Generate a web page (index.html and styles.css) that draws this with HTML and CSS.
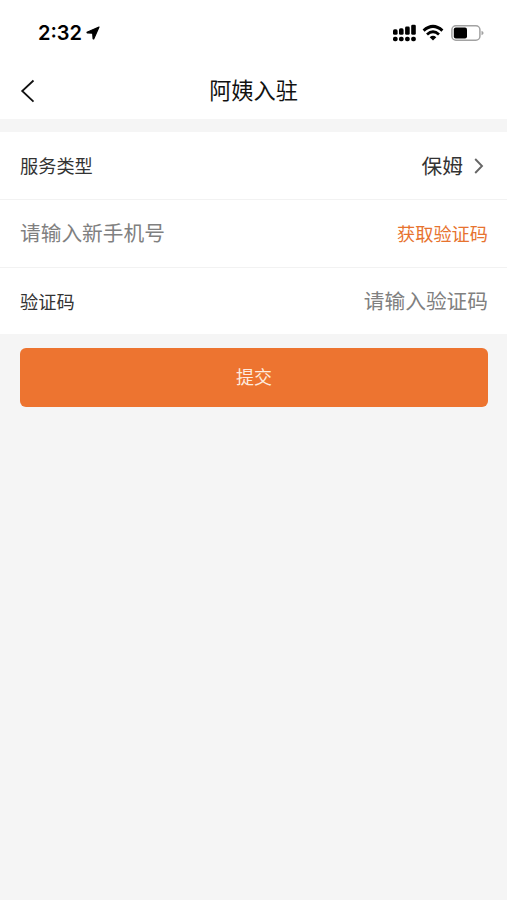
FILE: index.html
```html
<!DOCTYPE html>
<html lang="zh-CN">
<head>
  <meta charset="utf-8">
  <meta name="viewport" content="width=device-width, initial-scale=1">
  <title>阿姨入驻</title>
  <link rel="stylesheet" href="styles.css">
</head>
<body>
  <header class="header">
    <div class="status-bar">
      <div class="status-left">
        <span class="time">2:32</span>
        <svg class="location" width="14" height="14" viewBox="0 0 14 14">
          <path d="M13 1 L1 6.2 L1.2 6.8 L6.7 7.2 L7.1 12.8 L7.7 12.9 Z" stroke="#000" stroke-width="1.2" stroke-linejoin="round"/>
        </svg>
      </div>
      <div class="status-right">
        <svg width="24" height="18" viewBox="0 0 24 18">
          <rect x="0" y="5.3" width="4.6" height="5.5" rx="1.6"/>
          <rect x="6" y="4.3" width="4.6" height="6.5" rx="1.6"/>
          <rect x="12.1" y="2.5" width="4.6" height="8.3" rx="1.4"/>
          <rect x="18.2" y="0.7" width="4.6" height="10.1" rx="1.4"/>
          <rect x="0" y="12.7" width="4.6" height="4.6" rx="1.8"/>
          <rect x="6" y="12.7" width="4.6" height="4.6" rx="1.8"/>
          <rect x="12.1" y="12.7" width="4.6" height="4.6" rx="1.8"/>
          <rect x="18.2" y="12.7" width="4.6" height="4.6" rx="1.8"/>
        </svg>
        <svg class="wifi" width="22" height="18" viewBox="0 0 22 18">
          <path d="M1.6 6.6 Q11 -1.8 20.4 6.6" fill="none" stroke="#000" stroke-width="3"/>
          <path d="M5 10.5 Q11 5 17 10.5" fill="none" stroke="#000" stroke-width="2.8"/>
          <path d="M7.7 13.2 Q11 10.3 14.3 13.2 L11 16.4 Z"/>
        </svg>
        <svg class="battery" width="33" height="18" viewBox="0 0 33 18">
          <rect x="0.9" y="1.8" width="28" height="14.4" rx="4" fill="#fff" stroke="#a2a2a2" stroke-width="1.5"/>
          <rect x="2.8" y="3.6" width="13.2" height="10.8" rx="2"/>
          <path d="M30.5 6.8 Q32.6 7.6 32.6 9 Q32.6 10.4 30.5 11.2 Z" fill="#a2a2a2"/>
        </svg>
      </div>
    </div>
    <div class="nav-bar">
      <a class="back" href="#" aria-label="返回">
        <svg width="16" height="24" viewBox="0 0 16 24">
          <path d="M13.5 1.5 L2.2 12 L13.5 22.7" fill="none" stroke="#111" stroke-width="1.8"/>
        </svg>
      </a>
      <h1 class="title">阿姨入驻</h1>
    </div>
  </header>

  <form class="form">
    <div class="row">
      <span class="label">服务类型</span>
      <div class="select">
        <span class="value">保姆</span>
        <svg class="arrow" width="10" height="16" viewBox="0 0 10 16">
          <path d="M1.2 1 L8 8 L1.2 15" fill="none" stroke="#666" stroke-width="1.9"/>
        </svg>
      </div>
    </div>
    <div class="row">
      <input class="input input-phone" type="tel" placeholder="请输入新手机号">
      <button class="get-code" type="button">获取验证码</button>
    </div>
    <div class="row">
      <label class="label label-code" for="code">验证码</label>
      <input class="input input-right" id="code" type="text" placeholder="请输入验证码">
    </div>
    <div class="footer">
      <button class="submit" type="button">提交</button>
    </div>
  </form>
</body>
</html>
```

FILE: styles.css
```css
* {
  box-sizing: border-box;
}
body {
  margin: 0;
  min-height: 100vh;
  background-color: #f5f5f5;
  color: #333;
  font-family: "Noto Sans CJK SC", sans-serif;
}
.header {
  height: 119px;
  background-color: #fff;
}
.status-bar {
  display: flex;
  justify-content: space-between;
  height: 62px;
  padding: 4px 23px 0 38px;
}
.status-left,
.status-right {
  display: flex;
  align-items: center;
  height: 58px;
}
.time {
  color: #000;
  font-family: Inter, sans-serif;
  font-size: 20px;
  font-weight: 600;
}
.location {
  margin-left: 4px;
}
.wifi {
  margin: 0 7px 0 5px;
}
.nav-bar {
  display: grid;
  grid-template-columns: 60px 1fr 60px;
  align-items: center;
  height: 57px;
}
.back {
  display: flex;
  padding-left: 20px;
}
.title {
  margin: 0;
  padding-bottom: 2px;
  color: #111;
  font-size: 22.2px;
  font-weight: 400;
  line-height: 55px;
  text-align: center;
}
.form {
  margin-top: 13px;
}
.row {
  display: flex;
  align-items: center;
  justify-content: space-between;
  height: 68px;
  padding: 0 19px 0 20px;
  border-bottom: 1px solid #f2f2f2;
  background-color: #fff;
}
.row:nth-child(3) {
  height: 66px;
  border-bottom: none;
}
.label {
  padding-bottom: 2px;
  font-size: 18.2px;
}
.label-code {
  padding-bottom: 0;
}
.select {
  display: flex;
  align-items: center;
  padding-right: 4px;
  font-size: 20.7px;
}
.value {
  padding-bottom: 2px;
}
.arrow {
  margin-left: 11px;
}
.input {
  width: 240px;
  padding: 0 0 2px;
  border: none;
  outline: none;
  background: none;
  font-family: inherit;
  font-size: 20.7px;
}
.input-phone {
  padding-bottom: 4px;
}
.input::placeholder {
  color: #808080;
}
.input-right {
  text-align: right;
}
.get-code {
  padding: 0 0 2px;
  border: none;
  background: none;
  color: #e7732f;
  font-family: inherit;
  font-size: 18.2px;
}
.footer {
  padding: 14px 19px 0 20px;
}
.submit {
  width: 100%;
  height: 59px;
  padding: 0 0 3px;
  border: none;
  border-radius: 6px;
  background-color: #ed7430;
  color: #fdebdf;
  font-family: inherit;
  font-size: 18px;
}
```
